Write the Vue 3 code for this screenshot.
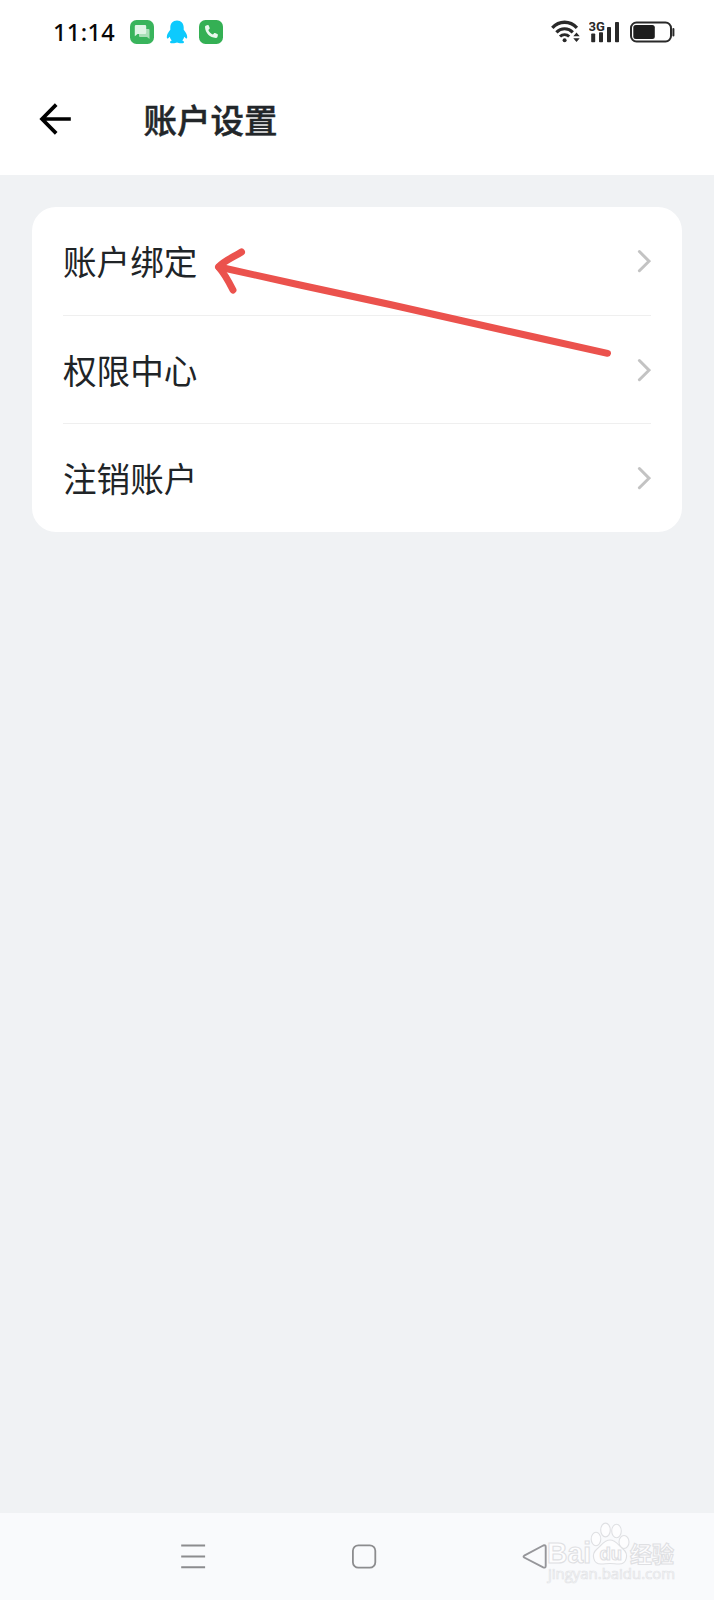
<template>
  <div class="screen">
    <div class="status-bar">
      <span class="time">11:14</span>
      <div class="notifications">
        <svg class="notice" width="24" height="24" viewBox="0 0 24 24">
          <rect width="24" height="24" rx="6.5" fill="#39b45c" />
          <path d="M9 9h9.5a1 1 0 0 1 1 1v9l-2.5-2H10a1 1 0 0 1-1-1z" fill="#a9dfb8" />
          <path d="M6 5h9a1.2 1.2 0 0 1 1.2 1.2v6.6A1.2 1.2 0 0 1 15 14H7.5L4.8 16.200V6.200A1.200 1.200 0 0 1 6 5z" fill="#dff4e5" />
        </svg>
        <svg class="notice" width="24" height="24" viewBox="0 0 24 24">
          <path
            d="M12 0.500C7.800 0.500 5.300 3.600 5.300 7.500v2.300C3.500 12 1.800 14.400 1.800 17c0 1.600.8 1.900 1.700.9l1.200-1.100c.4 1.500 1 2.700 2 3.700-1.500.5-2 1.300-1.500 2.200.5.900 5.300.8 6.800-.2 1.500 1 6.300 1.100 6.800.2.500-.9 0-1.700-1.500-2.200 1-1 1.600-2.200 2-3.700l1.200 1.100c.9 1 1.700.7 1.700-.9 0-2.600-1.700-5-3.500-7.200V7.500C18.700 3.600 16.200.5 12 .5z"
            fill="#0dcafd"
          />
        </svg>
        <svg class="notice" width="24" height="24" viewBox="0 0 24 24">
          <rect width="24" height="24" rx="6.500" fill="#34b054" />
          <path
            d="M7.200 5.400l1.500-.4c.5-.1.900.1 1.100.6l.9 2.300c.1.400 0 .8-.3 1.100L9.300 10c.9 2 2.500 3.600 4.600 4.600l1-1.200c.3-.3.700-.4 1.100-.3l2.300.9c.5.200.7.700.6 1.100l-.4 1.600c-.2.800-.9 1.300-1.700 1.200C10.900 17.700 6.300 13.100 6 7c0-.800.5-1.400 1.200-1.600z"
            fill="#e9f8ed"
          />
        </svg>
      </div>
      <div class="system">
        <svg width="30" height="24" viewBox="0 0 30 24" fill="none" stroke="#292929">
          <path d="M1.300 7.800C8.200.4 19 .4 25.900 7.800" stroke-width="3.300" />
          <path d="M5.400 12.400c4.600-4.800 11.800-4.800 16.400 0" stroke-width="3.100" />
          <path d="M9 16.600c2.600-2.700 6.600-2.700 9.200 0" stroke-width="2.900" />
          <circle cx="13.600" cy="20.300" r="2" fill="#292929" stroke="none" />
          <path d="M22.300 16.200l3.200-3.700 3.200 3.700zM22.300 18.300l3.200 3.700 3.200-3.700z" fill="#292929" stroke="none" />
        </svg>
        <svg class="signal" width="31" height="24" viewBox="0 0 31 24" fill="#292929">
          <text x="-0.500" y="10.500" class="network">3G</text>
          <rect x="2.200" y="13.500" width="4" height="8.800" rx="0.800" />
          <rect x="10" y="12.200" width="4" height="10.100" rx="0.800" />
          <rect x="18" y="7" width="4" height="15.300" rx="0.800" />
          <rect x="26" y="2" width="4" height="20.300" rx="0.800" />
        </svg>
        <svg class="battery" width="46" height="22" viewBox="0 0 46 22">
          <rect x="1" y="1.500" width="40" height="19" rx="5.500" fill="none" stroke="#292929" stroke-width="2" />
          <rect x="3.300" y="4" width="21.500" height="14" rx="2.500" fill="#1d1d1d" />
          <path d="M43.400 8v6.500" stroke="#292929" stroke-width="2" stroke-linecap="round" />
        </svg>
      </div>
    </div>

    <header class="title-bar">
      <svg class="back" width="32" height="32" viewBox="0 0 32 32" fill="none" stroke="#000" stroke-width="3.700">
        <path d="M31.800 16H3M17.200 1.600L3 16l14.200 14.400" />
      </svg>
      <h1 class="title">账户设置</h1>
    </header>

    <main class="content">
      <ul class="card">
        <li v-for="item in items" :key="item" class="row">
          <span class="label">{{ item }}</span>
          <svg width="14" height="24" viewBox="0 0 14 24" fill="none" stroke="#c3c3c3" stroke-width="3">
            <path d="M2.400 2.500L12 12.200l-9.600 9.500" stroke-linecap="round" />
          </svg>
        </li>
      </ul>
    </main>

    <nav class="nav-bar">
      <svg class="nav-icon" width="26" height="26" viewBox="0 0 26 26" fill="none" stroke="#8c8c8e" stroke-width="2">
        <path d="M1.200 2.500h23.900M1.200 13.500h23.900M1.200 24.300h23.900" />
      </svg>
      <svg class="nav-icon" width="26" height="26" viewBox="0 0 26 26" fill="none" stroke="#8c8c8e" stroke-width="1.800">
        <rect x="1.900" y="2.300" width="22.400" height="22.400" rx="5.500" />
      </svg>
      <svg class="nav-icon" width="26" height="26" viewBox="0 0 26 26" fill="none" stroke="#96969a" stroke-width="1.900">
        <path d="M2.200 12.700L21.200 2.500q2.500-1 2.500 1.200v19.400q0 2.200-2.500 1.200L2.200 14.500q-1.300-.9 0-1.800z" />
      </svg>
    </nav>

    <svg class="arrow" width="410" height="120" viewBox="0 0 410 120">
      <path d="M10 22L91 40l90 19.500 42 9.500 100 22.500L398.500 108.300" />
      <path d="M32.500 7C25 12 16 15 9.500 22c5 5.500 10 14 14.500 23" />
    </svg>

    <svg class="watermark" width="134" height="66" viewBox="0 0 134 66">
      <g class="mark">
        <text x="2" y="42.500" class="brand" textLength="44" lengthAdjust="spacingAndGlyphs">Bai</text>
        <ellipse cx="51" cy="19" rx="4.800" ry="6.700" />
        <ellipse cx="60.500" cy="10" rx="4.800" ry="6.900" />
        <ellipse cx="71.500" cy="11" rx="4.800" ry="6.700" />
        <ellipse cx="79" cy="22" rx="5" ry="6.500" />
        <path d="M65 20c-6 0-8 5-13 9-6 5-4 15 4 15 4 0 5-.5 9-.5s5 .5 9 .5c8 0 10-10 4-15-5-4-7-9-13-9z" />
        <text x="54.500" y="40" class="du">du</text>
        <text x="85" y="41.500" class="cn">经验</text>
      </g>
      <text x="3" y="59" class="url" textLength="127" lengthAdjust="spacingAndGlyphs">jingyan.baidu.com</text>
    </svg>
  </div>
</template>

<script setup>
const items = ['账户绑定', '权限中心', '注销账户'];
</script>

<style>
body {
  margin: 0;
  background: #f0f2f4;
}
</style>

<style scoped>
.screen {
  position: relative;
  display: flex;
  flex-direction: column;
  width: 714px;
  height: 1600px;
  overflow: hidden;
  background: #f0f2f4;
  font-family: "Noto Sans CJK SC", sans-serif;
}

.status-bar {
  display: flex;
  align-items: center;
  box-sizing: border-box;
  height: 64px;
  padding: 0 38px 0 53px;
  background: #fff;
}

.time {
  width: 77px;
  font-family: "Noto Sans", sans-serif;
  font-size: 23.5px;
  font-weight: 500;
  letter-spacing: 0.4px;
  line-height: 30px;
  color: #080808;
}

.notifications {
  display: flex;
  gap: 10.5px;
}

.system {
  display: flex;
  align-items: center;
  margin-left: auto;
}

.signal {
  margin-left: 8px;
}

.network {
  font-family: Roboto, sans-serif;
  font-size: 13px;
  font-weight: 700;
}

.battery {
  margin-left: 10px;
}

.title-bar {
  display: flex;
  align-items: center;
  box-sizing: border-box;
  height: 111px;
  padding: 0 39px 1px;
  background: #fff;
}

.title {
  margin: 0 0 0 72.5px;
  font-size: 33.5px;
  font-weight: 500;
  line-height: 48px;
  color: #222629;
  -webkit-text-stroke: 0.5px #222629;
}

.content {
  flex: 1;
  padding: 32px;
}

.card {
  margin: 0;
  padding: 0 31px 1px;
  list-style: none;
  background: #fff;
  border-radius: 24px;
}

.row {
  display: flex;
  align-items: center;
  justify-content: space-between;
  box-sizing: border-box;
  height: 108px;
}

.row + .row {
  border-top: 1px solid #efefef;
}

.label {
  font-size: 33.6px;
  line-height: 48px;
  color: #202427;
}

.nav-bar {
  display: flex;
  gap: 145px;
  box-sizing: border-box;
  height: 87px;
  padding: 30px 0 0 180px;
  background: #f9fafc;
}

.arrow {
  position: absolute;
  top: 245px;
  left: 209px;
  fill: none;
  stroke: #eb524d;
  stroke-width: 7;
  stroke-linecap: round;
  stroke-linejoin: round;
}

.watermark {
  position: absolute;
  top: 1520px;
  left: 545px;
}

.mark {
  fill: #fdfdfe;
  stroke: #dfe0e3;
  stroke-width: 1.1;
}

.brand {
  font-family: "Liberation Sans", sans-serif;
  font-size: 29px;
  font-weight: 700;
}

.du {
  font-family: "Liberation Sans", sans-serif;
  font-size: 18.5px;
  font-weight: 700;
}

.cn {
  font-size: 22px;
  font-weight: 700;
}

.url {
  font-family: "Open Sans", sans-serif;
  font-size: 14px;
  fill: #fff;
  stroke: #e3e4e7;
  stroke-width: 0.7;
}
</style>
